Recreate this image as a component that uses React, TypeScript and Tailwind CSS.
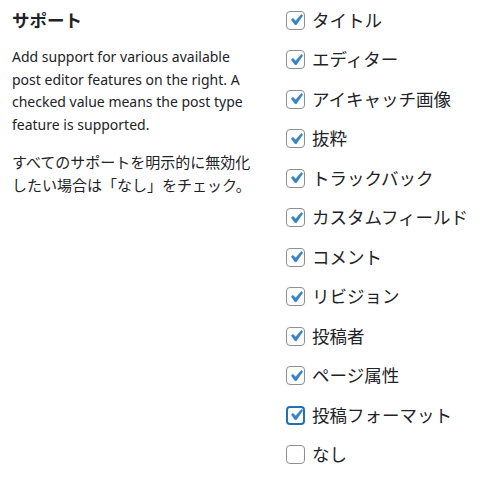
import React from "react";

const features = [
  { label: "タイトル", checked: true },
  { label: "エディター", checked: true },
  { label: "アイキャッチ画像", checked: true },
  { label: "抜粋", checked: true },
  { label: "トラックバック", checked: true },
  { label: "カスタムフィールド", checked: true },
  { label: "コメント", checked: true },
  { label: "リビジョン", checked: true },
  { label: "投稿者", checked: true },
  { label: "ページ属性", checked: true },
  { label: "投稿フォーマット", checked: true, focused: true },
  { label: "なし", checked: false },
];

const font = "font-['Noto_Sans','Noto_Sans_CJK_JP',sans-serif]";

const Check = ({ checked, focused }: { checked: boolean; focused?: boolean }) => (
  <span
    className={
      focused
        ? "flex h-[19px] w-[19px] shrink-0 items-center justify-center rounded-[4px] border-2 border-[#2271b1] bg-white"
        : "flex h-[19px] w-[19px] shrink-0 items-center justify-center rounded-[4px] border border-[#8c8f94] bg-white"
    }
  >
    {checked && (
      <svg viewBox="0 0 20 20" className="-m-1 h-[22px] w-[22px] shrink-0">
        <path
          d="M14.83 4.89l1.34.94-5.81 8.38H9.02L5.78 9.67l1.34-1.25 2.57 2.4z"
          fill="#3582c4"
          stroke="#3582c4"
          strokeWidth="0.5"
          strokeLinejoin="round"
        />
      </svg>
    )}
  </span>
);

export default function App() {
  return (
    <div className={`flex h-[490px] w-[482px] bg-white text-[#1d2327] ${font}`}>
      <div className="w-[274px] shrink-0 pl-3 pt-[9px]">
        <h2 className="text-[17.5px] font-bold leading-[22px]">サポート</h2>
        <p className="mt-[15px] w-[234px] text-[14px] leading-[22.7px]">
          Add support for various available post editor features on the right. A checked value means the post type feature is supported.
        </p>
        <p className="mt-[14px] w-[242px] text-[15px] leading-[22.7px]">
          すべてのサポートを明示的に無効化したい場合は「なし」をチェック。
        </p>
      </div>
      <ul className="flex flex-col pl-[12px] pt-[0.5px]">
        {features.map((f) => (
          <li key={f.label} className="flex h-[39.5px] items-center gap-[7px]">
            <Check checked={f.checked} focused={f.focused} />
            <span className="text-[17.5px] leading-none">{f.label}</span>
          </li>
        ))}
      </ul>
    </div>
  );
}
